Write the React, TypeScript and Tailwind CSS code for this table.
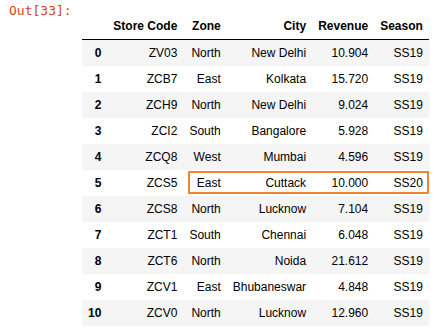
import React from "react";

const rows: [string, string, string, string, string, string][] = [
  ["0", "ZV03", "North", "New Delhi", "10.904", "SS19"],
  ["1", "ZCB7", "East", "Kolkata", "15.720", "SS19"],
  ["2", "ZCH9", "North", "New Delhi", "9.024", "SS19"],
  ["3", "ZCI2", "South", "Bangalore", "5.928", "SS19"],
  ["4", "ZCQ8", "West", "Mumbai", "4.596", "SS19"],
  ["5", "ZCS5", "East", "Cuttack", "10.000", "SS20"],
  ["6", "ZCS8", "North", "Lucknow", "7.104", "SS19"],
  ["7", "ZCT1", "South", "Chennai", "6.048", "SS19"],
  ["8", "ZCT6", "North", "Noida", "21.612", "SS19"],
  ["9", "ZCV1", "East", "Bhubaneswar", "4.848", "SS19"],
  ["10", "ZCV0", "North", "Lucknow", "12.960", "SS19"],
];

export default function App() {
  return (
    <div className="w-[442px] h-[335px] bg-white overflow-hidden flex">
      <div
        className="w-[82px] shrink-0 pl-[9px] pt-[3px] text-[13px] leading-[16px] text-[#D84315]"
        style={{ fontFamily: '"DejaVu Sans Mono", monospace' }}
      >
        Out[33]:
      </div>
      <div className="relative mt-[13px]">
        <table
          className="border-collapse text-[12px] text-black"
          style={{ fontFamily: '"Liberation Sans", Arial, sans-serif' }}
        >
          <thead>
            <tr className="border-b border-black">
              {["", "Store Code", "Zone", "City", "Revenue", "Season"].map((h, i) => (
                <th key={i} className="text-right font-bold px-[6px] py-[6px] leading-[14px] align-bottom whitespace-nowrap">
                  {h}
                </th>
              ))}
            </tr>
          </thead>
          <tbody>
            {rows.map((r, i) => (
              <tr key={i} className={i % 2 === 0 ? "bg-[#f5f5f5]" : "bg-white"}>
                <th className="text-right font-bold px-[6px] py-[6px] leading-[14px] whitespace-nowrap">{r[0]}</th>
                {r.slice(1).map((c, j) => (
                  <td key={j} className="text-right px-[6px] py-[6px] leading-[14px] whitespace-nowrap">
                    {c}
                  </td>
                ))}
              </tr>
            ))}
          </tbody>
        </table>
        <div className="absolute left-[106px] top-[158px] w-[241px] h-[23px] border-2 border-[#EF8533] pointer-events-none" />
      </div>
    </div>
  );
}
